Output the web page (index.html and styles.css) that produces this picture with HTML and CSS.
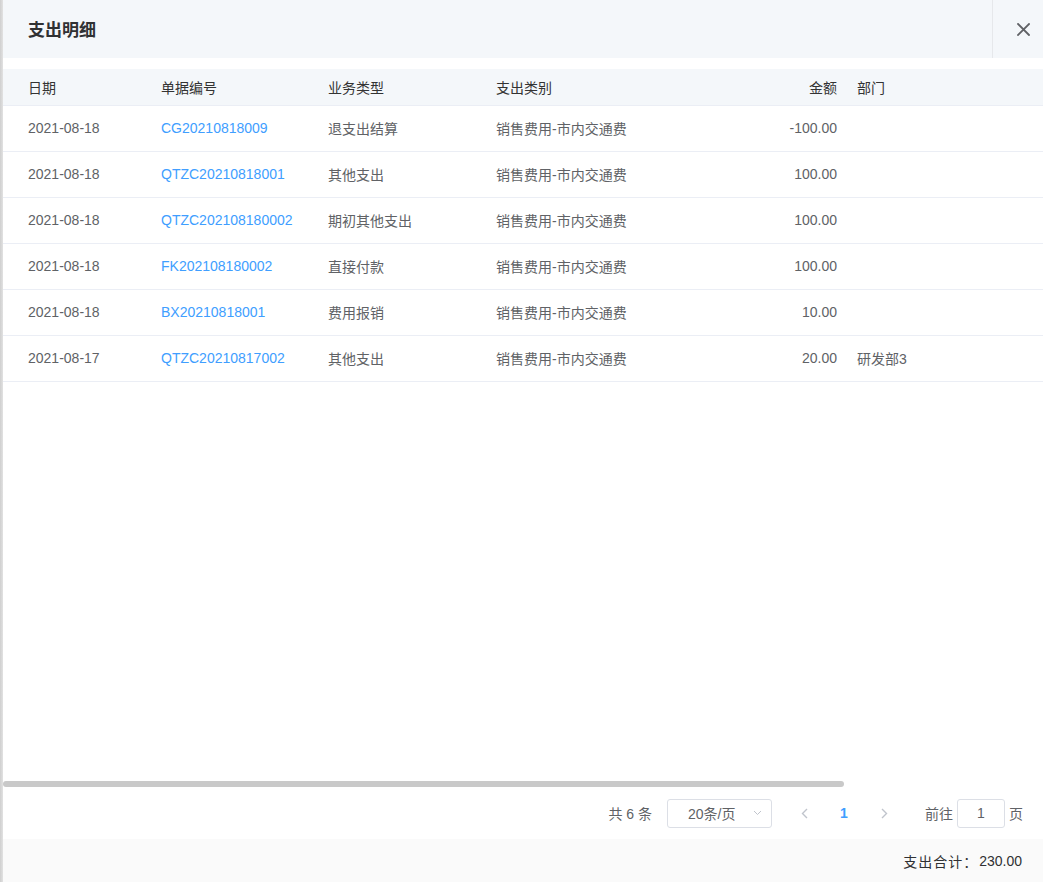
FILE: index.html
```html
<!DOCTYPE html>
<html lang="zh-CN">
<head>
<meta charset="utf-8">
<title>支出明细</title>
<link rel="stylesheet" href="styles.css">
</head>
<body>
<div class="backdrop-edge"></div>
<div class="drawer">
  <header class="drawer-header">
    <h2 class="drawer-title">支出明细</h2>
    <button class="drawer-close" aria-label="关闭">
      <svg width="13" height="13" viewBox="0 0 13 13"><path d="M1 1 L12 12 M12 1 L1 12" stroke="#606266" stroke-width="1.8" stroke-linecap="square" fill="none"/></svg>
    </button>
  </header>

  <div class="table-scroll">
    <div class="table">
      <div class="row head">
        <div class="cell first">日期</div>
        <div class="cell">单据编号</div>
        <div class="cell">业务类型</div>
        <div class="cell">支出类别</div>
        <div class="cell num">金额</div>
        <div class="cell">部门</div>
      </div>
      <div class="row">
        <div class="cell first">2021-08-18</div>
        <div class="cell link">CG20210818009</div>
        <div class="cell">退支出结算</div>
        <div class="cell">销售费用-市内交通费</div>
        <div class="cell num">-100.00</div>
        <div class="cell"></div>
      </div>
      <div class="row">
        <div class="cell first">2021-08-18</div>
        <div class="cell link">QTZC20210818001</div>
        <div class="cell">其他支出</div>
        <div class="cell">销售费用-市内交通费</div>
        <div class="cell num">100.00</div>
        <div class="cell"></div>
      </div>
      <div class="row">
        <div class="cell first">2021-08-18</div>
        <div class="cell link">QTZC202108180002</div>
        <div class="cell">期初其他支出</div>
        <div class="cell">销售费用-市内交通费</div>
        <div class="cell num">100.00</div>
        <div class="cell"></div>
      </div>
      <div class="row">
        <div class="cell first">2021-08-18</div>
        <div class="cell link">FK202108180002</div>
        <div class="cell">直接付款</div>
        <div class="cell">销售费用-市内交通费</div>
        <div class="cell num">100.00</div>
        <div class="cell"></div>
      </div>
      <div class="row">
        <div class="cell first">2021-08-18</div>
        <div class="cell link">BX20210818001</div>
        <div class="cell">费用报销</div>
        <div class="cell">销售费用-市内交通费</div>
        <div class="cell num">10.00</div>
        <div class="cell"></div>
      </div>
      <div class="row">
        <div class="cell first">2021-08-17</div>
        <div class="cell link">QTZC20210817002</div>
        <div class="cell">其他支出</div>
        <div class="cell">销售费用-市内交通费</div>
        <div class="cell num">20.00</div>
        <div class="cell">研发部3</div>
      </div>
    </div>
  </div>
  <div class="hscroll"><div class="hscroll-thumb"></div></div>

  <div class="pagination">
    <span class="total">共 6 条</span>
    <div class="sizes">
      <span>20条/页</span>
      <svg width="9" height="6" viewBox="0 0 9 6"><path d="M1 1 L4.5 4.5 L8 1" stroke="#c0c4cc" stroke-width="1" fill="none"/></svg>
    </div>
    <button class="pg-btn" aria-label="上一页">
      <svg width="7" height="11" viewBox="0 0 7 11"><path d="M6 1 L1.5 5.5 L6 10" stroke="#c0c4cc" stroke-width="1.4" fill="none"/></svg>
    </button>
    <span class="pg-num">1</span>
    <button class="pg-btn" aria-label="下一页">
      <svg width="7" height="11" viewBox="0 0 7 11"><path d="M1 1 L5.5 5.5 L1 10" stroke="#c0c4cc" stroke-width="1.4" fill="none"/></svg>
    </button>
    <span class="jump">前往</span>
    <div class="jump-input">1</div>
    <span class="jump-unit">页</span>
  </div>

  <footer class="drawer-footer"><span class="sum-label">支出合计：</span><span class="sum-value">230.00</span></footer>
</div>
</body>
</html>
```

FILE: styles.css
```css
* { box-sizing: border-box; }
html, body { margin: 0; padding: 0; }
body {
  display: flex;
  width: 1043px;
  height: 882px;
  overflow: hidden;
  font-family: "Liberation Sans", "Noto Sans CJK SC", sans-serif;
  font-size: 14px;
  color: #606266;
  background: #fff;
}
.backdrop-edge {
  width: 3px;
  flex: none;
  background: linear-gradient(to right, #cfcfcf, #e2e2e2);
}
.drawer {
  width: 1040px;
  height: 882px;
  display: flex;
  flex-direction: column;
  background: #fff;
}
.drawer-header {
  height: 58px;
  flex: none;
  display: flex;
  align-items: stretch;
  background: #f4f7fa;
}
.drawer-title {
  flex: 1;
  margin: 0;
  padding-left: 25px;
  padding-bottom: 2px;
  display: flex;
  align-items: center;
  font-size: 17px;
  font-weight: bold;
  color: #303133;
}
.drawer-close {
  width: 51px;
  border: 0;
  border-left: 1px solid #e6e8eb;
  background: transparent;
  padding: 0 0 0 24px;
  display: flex;
  align-items: center;
  margin: 0;
}
.drawer-close svg { display: block; margin-top: 1px; }

.table-scroll {
  flex: 1;
  margin-top: 11px;
  overflow: hidden;
}
.hscroll {
  height: 6px;
  flex: none;
}
.hscroll-thumb {
  width: 841px;
  height: 6px;
  background: #c9c9c9;
  border-radius: 3px;
}

.table { width: 1286px; }
.row {
  display: grid;
  grid-template-columns: 148px 167px 168px 200px 161px 1fr;
  height: 46px;
  border-bottom: 1px solid #ebeef5;
}
.row.head {
  height: 37px;
  background: #f4f7fa;
  color: #333;
}
.cell {
  display: flex;
  align-items: center;
  padding: 0 10px 2px;
  white-space: nowrap;
}
.row.head .cell { padding-bottom: 1px; }
.row.head .cell.first { padding-left: 25px; }
.cell.first { padding-left: 25px; }
.cell.num { justify-content: flex-end; }
.cell.link { color: #409eff; }

.pagination {
  height: 52px;
  flex: none;
  display: flex;
  align-items: center;
  justify-content: flex-end;
  padding-right: 20px;
  color: #606266;
}
.total { margin-right: 15px; }
.sizes {
  width: 105px;
  height: 29px;
  border: 1px solid #dcdfe6;
  border-radius: 3px;
  display: flex;
  align-items: center;
  justify-content: space-between;
  padding: 0 9px 0 20px;
  margin-right: 12px;
}
.sizes svg { display: block; }
.pg-btn {
  width: 40px;
  height: 29px;
  border: 0;
  background: transparent;
  padding: 0;
  margin: 0;
  display: flex;
  align-items: center;
  justify-content: center;
}
.pg-btn svg { display: block; }
.pg-num {
  width: 40px;
  text-align: center;
  color: #409eff;
  font-weight: bold;
}
.jump { margin-left: 21px; margin-right: 4px; }
.jump-input {
  width: 48px;
  height: 29px;
  border: 1px solid #dcdfe6;
  border-radius: 3px;
  display: flex;
  align-items: center;
  justify-content: center;
  margin-right: 4px;
}
.drawer-footer {
  height: 43px;
  flex: none;
  background: #fafafa;
  display: flex;
  align-items: center;
  justify-content: flex-end;
  padding-right: 21px;
  color: #303133;
}
.sum-label { letter-spacing: 1px; margin-right: 1px; }
```
